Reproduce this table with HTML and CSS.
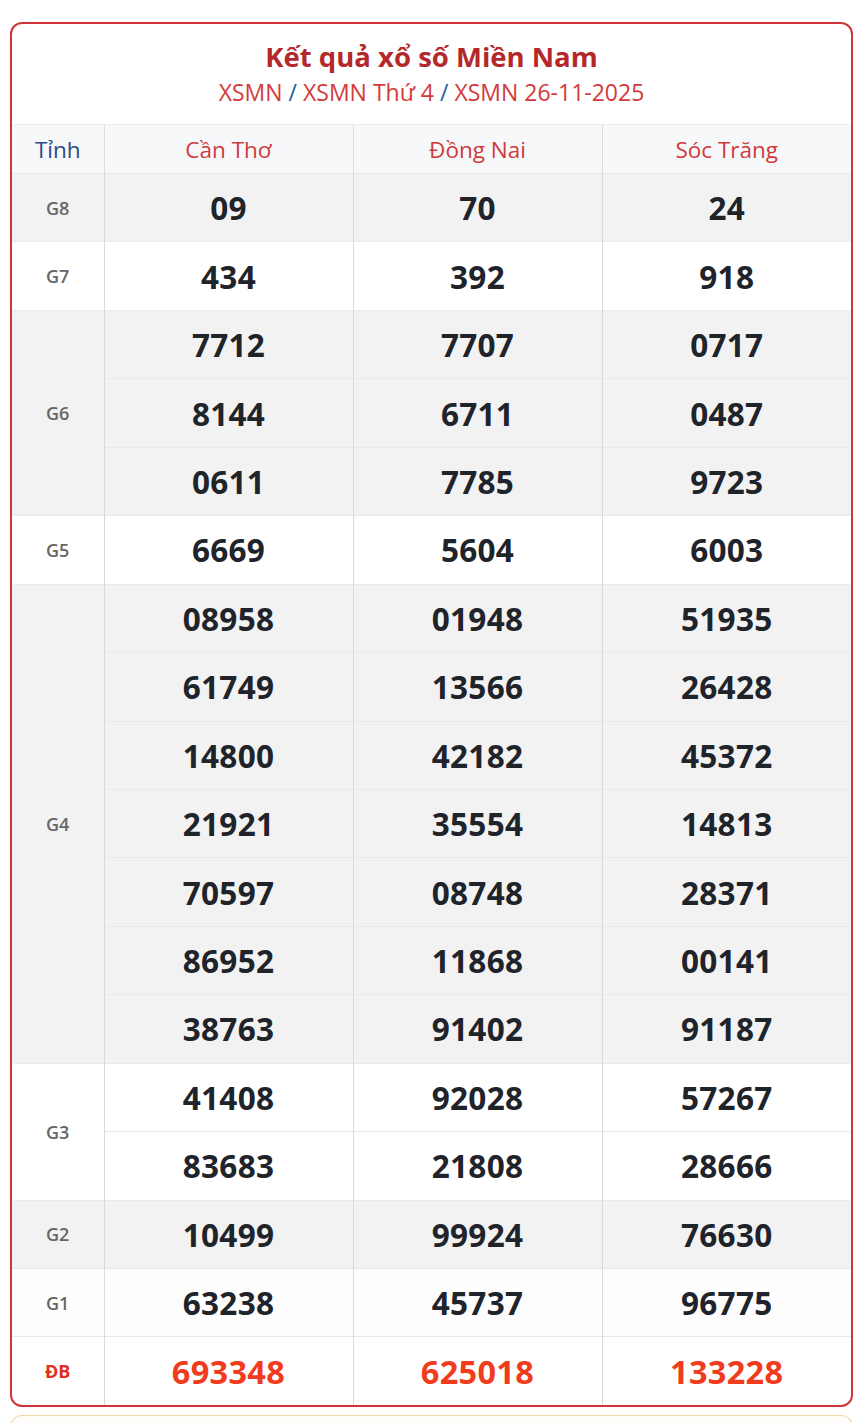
FILE: index.html
```html
<!DOCTYPE html>
<html lang="vi">
<head>
<meta charset="utf-8">
<title>Kết quả xổ số Miền Nam</title>
<link rel="stylesheet" href="styles.css">
</head>
<body>
<div class="card">
  <div class="card-head">
    <h2 class="title">Kết quả xổ số Miền Nam</h2>
    <div class="crumbs"><a>XSMN</a><span class="sep"> / </span><a>XSMN Thứ 4</a><span class="sep"> / </span><a>XSMN 26-11-2025</a></div>
  </div>
  <table class="kq">
    <colgroup><col class="c-prize"><col><col><col></colgroup>
    <thead>
      <tr><th class="tinh">Tỉnh</th><th>Cần Thơ</th><th>Đồng Nai</th><th>Sóc Trăng</th></tr>
    </thead>
    <tbody class="grey">
      <tr><td class="prize">G8</td><td>09</td><td>70</td><td>24</td></tr>
    </tbody>
    <tbody>
      <tr><td class="prize">G7</td><td>434</td><td>392</td><td>918</td></tr>
    </tbody>
    <tbody class="grey">
      <tr><td class="prize" rowspan="3">G6</td><td>7712</td><td>7707</td><td>0717</td></tr>
      <tr><td>8144</td><td>6711</td><td>0487</td></tr>
      <tr><td>0611</td><td>7785</td><td>9723</td></tr>
    </tbody>
    <tbody>
      <tr><td class="prize">G5</td><td>6669</td><td>5604</td><td>6003</td></tr>
    </tbody>
    <tbody class="grey">
      <tr><td class="prize" rowspan="7">G4</td><td>08958</td><td>01948</td><td>51935</td></tr>
      <tr><td>61749</td><td>13566</td><td>26428</td></tr>
      <tr><td>14800</td><td>42182</td><td>45372</td></tr>
      <tr><td>21921</td><td>35554</td><td>14813</td></tr>
      <tr><td>70597</td><td>08748</td><td>28371</td></tr>
      <tr><td>86952</td><td>11868</td><td>00141</td></tr>
      <tr><td>38763</td><td>91402</td><td>91187</td></tr>
    </tbody>
    <tbody>
      <tr><td class="prize" rowspan="2">G3</td><td>41408</td><td>92028</td><td>57267</td></tr>
      <tr><td>83683</td><td>21808</td><td>28666</td></tr>
    </tbody>
    <tbody class="grey">
      <tr><td class="prize">G2</td><td>10499</td><td>99924</td><td>76630</td></tr>
    </tbody>
    <tbody class="light">
      <tr><td class="prize">G1</td><td>63238</td><td>45737</td><td>96775</td></tr>
    </tbody>
    <tbody class="special">
      <tr><td class="prize">ĐB</td><td>693348</td><td>625018</td><td>133228</td></tr>
    </tbody>
  </table>
</div>
<div class="next-card"></div>
</body>
</html>
```
FILE: styles.css
```css
html, body {
  margin: 0;
  padding: 0;
  background: #fff;
}
body {
  padding: 22px 8px 0 10px;
  font-family: "Open Sans", "Noto Sans", sans-serif;
  color: #212529;
}
.card {
  border: 2px solid #d0343a;
  border-radius: 12px;
  overflow: hidden;
  background: #fff;
}
.card-head {
  text-align: center;
  padding: 14px 0 16px;
}
.title {
  margin: 0;
  font-size: 27.5px;
  line-height: 38px;
  font-weight: 700;
  color: #b5282a;
}
.crumbs {
  font-size: 23px;
  line-height: 32px;
  color: #d33a3a;
}
.crumbs a { color: #d33a3a; }
.crumbs .sep { color: #1f5fa0; }
.kq {
  width: 100%;
  border-collapse: collapse;
  table-layout: fixed;
}
.c-prize { width: 92px; }
.kq th {
  height: 48px;
  padding: 0;
  background: #f7f8fa;
  border-top: 1px solid #ebedf0;
  border-left: 1px solid #dcdcdc;
  font-size: 22.5px;
  font-weight: 500;
  color: #d03a3a;
  text-align: center;
}
.kq th.tinh { color: #2d4a85; border-left: 0; }
.kq td {
  height: 67.44px;
  padding: 0;
  border-left: 1px solid #d9d9d9;
  border-top: 1px solid #e9e9e9;
  text-align: center;
  font-size: 31.5px;
  font-weight: 700;
  color: #1f232a;
  letter-spacing: 0.3px;
}
.kq td.prize {
  border-left: 0;
  font-size: 18px;
  font-weight: 600;
  color: #666;
  letter-spacing: 0;
}
.kq tbody.grey td { background: #f2f2f2; }
.kq tbody.light td { background: #fdfdfd; }
.kq tbody.special td { color: #f03c1d; font-size: 32.5px; }
.kq tbody.special td.prize { color: #e0301e; font-size: 18px; font-weight: 700; }
.next-card {
  margin-top: 8px;
  height: 40px;
  border: 1px solid #f1d6a8;
  border-bottom: 0;
  border-radius: 12px 12px 0 0;
  background: #fffdf7;
}
```
